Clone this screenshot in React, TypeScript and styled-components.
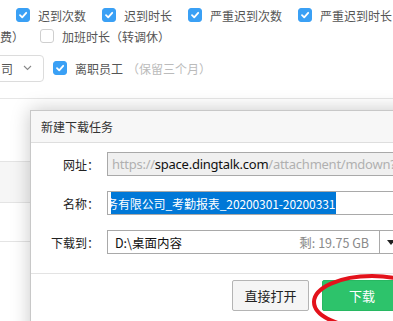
import React from 'react'
import styled, { createGlobalStyle } from 'styled-components'

const GlobalStyle = createGlobalStyle`
    html, body {
        margin: 0;
        padding: 0;
        background: #ffffff;
    }
    body {
        font-family: "Noto Sans CJK SC", "Noto Sans", sans-serif;
    }
`

const Page = styled.div`
    position: relative;
    width: 393px;
    height: 321px;
    overflow: hidden;
    background: #ffffff;
`

const FilterArea = styled.div`
    display: flex;
    flex-direction: column;
    height: 99px;
    border-bottom: 1px solid #e6e6e6;
    box-sizing: border-box;
`

interface RowProps {
    height: number
    indent: number
}

const FilterRow = styled.div<RowProps>`
    display: flex;
    align-items: center;
    height: ${ props => props.height }px;
    margin-left: ${ props => props.indent }px;
    white-space: nowrap;
`

const CheckItem = styled.div`
    display: flex;
    align-items: center;
    gap: 8px;
    margin-right: 16px;
    font-size: 12px;
    color: #555;
`

interface BoxProps {
    checked?: boolean
}

const CheckBox = styled.span<BoxProps>`
    display: inline-flex;
    align-items: center;
    justify-content: center;
    width: 14px;
    height: 14px;
    border-radius: 3px;
    box-sizing: border-box;
    background: ${ props => props.checked ? '#3aa0f5' : '#ffffff' };
    border: 1px solid ${ props => props.checked ? '#3aa0f5' : '#cfcfcf' };
`

const PlainText = styled.span`
    font-size: 12px;
    color: #555;
    margin-right: 16px;
`

const SelectBox = styled.div`
    display: flex;
    align-items: center;
    gap: 10px;
    height: 27px;
    width: 60px;
    margin-left: -16px;
    padding-left: 16px;
    box-sizing: border-box;
    border: 1px solid #dcdcdc;
    border-radius: 4px;
    font-size: 12px;
    color: #555;
    margin-right: 9px;
`

const Hint = styled.span`
    font-size: 12px;
    color: #bbbbbb;
    margin-left: -12px;
`

const TableArea = styled.div`
    display: flex;
    flex-direction: column;
    padding-top: 62px;
`

interface TableRowProps {
    height: number
    shaded?: boolean
}

const TableRow = styled.div<TableRowProps>`
    height: ${ props => props.height }px;
    border-top: 1px solid #e4e4e4;
    background: ${ props => props.shaded ? '#f6f6f6' : 'transparent' };
`

const Dialog = styled.div`
    position: absolute;
    left: 30px;
    top: 110px;
    width: 410px;
    height: 240px;
    background: #ffffff;
    border: 1px solid #c8c8c8;
    box-shadow: 0 0 18px rgba(0, 0, 0, 0.22);
    display: flex;
    flex-direction: column;
    font-family: "Noto Sans CJK SC", "Noto Sans", sans-serif;
`

const TitleBar = styled.div`
    height: 31px;
    display: flex;
    align-items: center;
    padding-left: 10px;
    background: #f7f7f7;
    border-bottom: 1px solid #dedede;
    font-size: 12px;
    color: #333;
`

const FormBody = styled.div`
    display: flex;
    flex-direction: column;
    gap: 15px;
    padding-top: 9px;
    height: 131px;
    box-sizing: border-box;
    border-bottom: 1px solid #e3e3e3;
`

const FormRow = styled.div`
    display: flex;
    align-items: center;
    height: 24px;
`

const Label = styled.div`
    width: 68px;
    text-align: right;
    font-size: 12px;
    color: #222;
    margin-right: 8px;
`

interface FieldProps {
    readOnly?: boolean
}

const Field = styled.div<FieldProps>`
    width: 310px;
    height: 24px;
    box-sizing: border-box;
    border: 1px solid #a9a9a9;
    background: ${ props => props.readOnly ? '#f0f0f0' : '#ffffff' };
    display: flex;
    align-items: center;
    overflow: hidden;
    white-space: nowrap;
    font-family: "Noto Sans", "Noto Sans CJK SC", sans-serif;
    font-size: 13px;
    color: #111;
`

const UrlText = styled.span`
    padding-left: 4px;
    letter-spacing: -0.25px;
`

const Faded = styled.span`
    color: #b0b0b0;
`

const ClipBox = styled.div`
    margin-left: 3px;
    height: 22px;
    display: flex;
    overflow: hidden;
`

const Selected = styled.span`
    margin-left: -5px;
    height: 22px;
    display: flex;
    align-items: center;
    padding-right: 1px;
    background: #0078d7;
    color: #ffffff;
    font-family: "Noto Sans CJK SC", "Noto Sans", sans-serif;
    font-size: 12px;
    letter-spacing: -0.1px;
`

const PathText = styled.span`
    flex: 1;
    padding-left: 7px;
    font-family: "Noto Sans CJK SC", "Noto Sans", sans-serif;
    font-size: 12.5px;
`

const FreeSpace = styled.span`
    color: #8a8a8a;
    padding-right: 10px;
    font-family: "Noto Sans CJK SC", "Noto Sans", sans-serif;
    font-size: 12.5px;
`

const DropButton = styled.div`
    width: 37px;
    height: 100%;
    border-left: 1px solid #a9a9a9;
    display: flex;
    align-items: center;
    padding-left: 7px;
    box-sizing: border-box;
`

const Footer = styled.div`
    display: flex;
    align-items: flex-start;
    padding-top: 6px;
    padding-left: 201px;
    gap: 13px;
`

interface ButtonProps {
    primary?: boolean
}

const Button = styled.div<ButtonProps>`
    height: 31px;
    width: ${ props => props.primary ? 80 : 77 }px;
    box-sizing: border-box;
    display: flex;
    align-items: center;
    justify-content: center;
    font-size: 13px;
    border-radius: 2px;
    color: ${ props => props.primary ? '#ffffff' : '#222' };
    background: ${ props => props.primary ? '#2dc36b' : '#f5f5f5' };
    border: 1px solid ${ props => props.primary ? '#27b862' : '#b4b4b4' };
`

const Ring = styled.svg`
    position: absolute;
    left: 310px;
    top: 273px;
`

const Tick = () => (
    <svg width="10" height="10" viewBox="0 0 10 10">
        <path d="M2 5.2 L4.2 7.3 L8.2 2.8" fill="none" stroke="#fff" strokeWidth="1.8" strokeLinecap="round" strokeLinejoin="round" />
    </svg>
)

const Chevron = () => (
    <svg width="9" height="6" viewBox="0 0 9 6">
        <path d="M1 1 L4.5 4.5 L8 1" fill="none" stroke="#888" strokeWidth="1.1" />
    </svg>
)

const App: React.FC = () => {
    return (
        <>
            <GlobalStyle />
            <Page>
                <FilterArea>
                    <FilterRow height={ 30 } indent={ 16 }>
                        <CheckItem><CheckBox checked><Tick /></CheckBox>迟到次数</CheckItem>
                        <CheckItem><CheckBox checked><Tick /></CheckBox>迟到时长</CheckItem>
                        <CheckItem><CheckBox checked><Tick /></CheckBox>严重迟到次数</CheckItem>
                        <CheckItem><CheckBox checked><Tick /></CheckBox>严重迟到时长</CheckItem>
                    </FilterRow>
                    <FilterRow height={ 12 } indent={ 0 }>
                        <PlainText>费）</PlainText>
                        <CheckItem><CheckBox />加班时长（转调休）</CheckItem>
                    </FilterRow>
                    <FilterRow height={ 52 } indent={ 0 }>
                        <SelectBox>司<Chevron /></SelectBox>
                        <CheckItem><CheckBox checked><Tick /></CheckBox>离职员工</CheckItem>
                        <Hint>（保留三个月）</Hint>
                    </FilterRow>
                </FilterArea>

                <TableArea>
                    <TableRow height={ 40 } shaded />
                    <TableRow height={ 38 } />
                    <TableRow height={ 57 } />
                </TableArea>

                <Dialog>
                    <TitleBar>新建下载任务</TitleBar>
                    <FormBody>
                        <FormRow>
                            <Label>网址：</Label>
                            <Field readOnly>
                                <UrlText><Faded>https://</Faded>space.dingtalk.com<Faded>/attachment/mdown?biz</Faded></UrlText>
                            </Field>
                        </FormRow>
                        <FormRow>
                            <Label>名称：</Label>
                            <Field>
                                <ClipBox>
                                    <Selected>务有限公司_考勤报表_20200301-20200331</Selected>
                                </ClipBox>
                            </Field>
                        </FormRow>
                        <FormRow>
                            <Label>下载到：</Label>
                            <Field>
                                <PathText>D:\桌面内容</PathText>
                                <FreeSpace>剩: 19.75 GB</FreeSpace>
                                <DropButton>
                                    <svg width="8" height="5" viewBox="0 0 8 5"><path d="M0 0 L8 0 L4 5 Z" fill="#222" /></svg>
                                </DropButton>
                            </Field>
                        </FormRow>
                    </FormBody>
                    <Footer>
                        <Button>直接打开</Button>
                        <Button primary>下载</Button>
                    </Footer>
                </Dialog>

                <Ring width="130" height="70" viewBox="0 0 130 70">
                    <ellipse cx="62" cy="29" rx="58" ry="26" fill="none" stroke="#e3121b" strokeWidth="4" />
                </Ring>
            </Page>
        </>
    )
}

export default App
